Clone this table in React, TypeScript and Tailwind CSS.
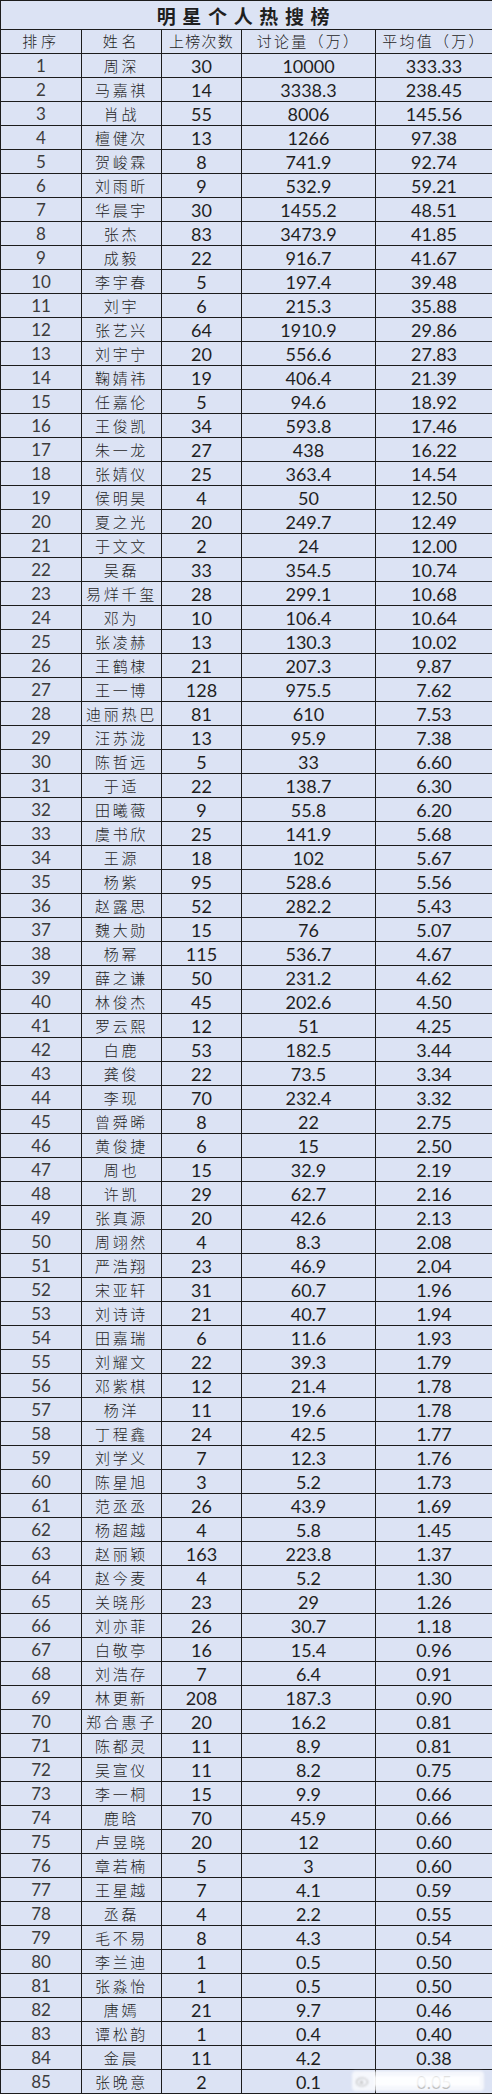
const rows: [string, string, string, string][] = [
  ["周深", "30", "10000", "333.33"],
  ["马嘉祺", "14", "3338.3", "238.45"],
  ["肖战", "55", "8006", "145.56"],
  ["檀健次", "13", "1266", "97.38"],
  ["贺峻霖", "8", "741.9", "92.74"],
  ["刘雨昕", "9", "532.9", "59.21"],
  ["华晨宇", "30", "1455.2", "48.51"],
  ["张杰", "83", "3473.9", "41.85"],
  ["成毅", "22", "916.7", "41.67"],
  ["李宇春", "5", "197.4", "39.48"],
  ["刘宇", "6", "215.3", "35.88"],
  ["张艺兴", "64", "1910.9", "29.86"],
  ["刘宇宁", "20", "556.6", "27.83"],
  ["鞠婧祎", "19", "406.4", "21.39"],
  ["任嘉伦", "5", "94.6", "18.92"],
  ["王俊凯", "34", "593.8", "17.46"],
  ["朱一龙", "27", "438", "16.22"],
  ["张婧仪", "25", "363.4", "14.54"],
  ["侯明昊", "4", "50", "12.50"],
  ["夏之光", "20", "249.7", "12.49"],
  ["于文文", "2", "24", "12.00"],
  ["吴磊", "33", "354.5", "10.74"],
  ["易烊千玺", "28", "299.1", "10.68"],
  ["邓为", "10", "106.4", "10.64"],
  ["张凌赫", "13", "130.3", "10.02"],
  ["王鹤棣", "21", "207.3", "9.87"],
  ["王一博", "128", "975.5", "7.62"],
  ["迪丽热巴", "81", "610", "7.53"],
  ["汪苏泷", "13", "95.9", "7.38"],
  ["陈哲远", "5", "33", "6.60"],
  ["于适", "22", "138.7", "6.30"],
  ["田曦薇", "9", "55.8", "6.20"],
  ["虞书欣", "25", "141.9", "5.68"],
  ["王源", "18", "102", "5.67"],
  ["杨紫", "95", "528.6", "5.56"],
  ["赵露思", "52", "282.2", "5.43"],
  ["魏大勋", "15", "76", "5.07"],
  ["杨幂", "115", "536.7", "4.67"],
  ["薛之谦", "50", "231.2", "4.62"],
  ["林俊杰", "45", "202.6", "4.50"],
  ["罗云熙", "12", "51", "4.25"],
  ["白鹿", "53", "182.5", "3.44"],
  ["龚俊", "22", "73.5", "3.34"],
  ["李现", "70", "232.4", "3.32"],
  ["曾舜晞", "8", "22", "2.75"],
  ["黄俊捷", "6", "15", "2.50"],
  ["周也", "15", "32.9", "2.19"],
  ["许凯", "29", "62.7", "2.16"],
  ["张真源", "20", "42.6", "2.13"],
  ["周翊然", "4", "8.3", "2.08"],
  ["严浩翔", "23", "46.9", "2.04"],
  ["宋亚轩", "31", "60.7", "1.96"],
  ["刘诗诗", "21", "40.7", "1.94"],
  ["田嘉瑞", "6", "11.6", "1.93"],
  ["刘耀文", "22", "39.3", "1.79"],
  ["邓紫棋", "12", "21.4", "1.78"],
  ["杨洋", "11", "19.6", "1.78"],
  ["丁程鑫", "24", "42.5", "1.77"],
  ["刘学义", "7", "12.3", "1.76"],
  ["陈星旭", "3", "5.2", "1.73"],
  ["范丞丞", "26", "43.9", "1.69"],
  ["杨超越", "4", "5.8", "1.45"],
  ["赵丽颖", "163", "223.8", "1.37"],
  ["赵今麦", "4", "5.2", "1.30"],
  ["关晓彤", "23", "29", "1.26"],
  ["刘亦菲", "26", "30.7", "1.18"],
  ["白敬亭", "16", "15.4", "0.96"],
  ["刘浩存", "7", "6.4", "0.91"],
  ["林更新", "208", "187.3", "0.90"],
  ["郑合惠子", "20", "16.2", "0.81"],
  ["陈都灵", "11", "8.9", "0.81"],
  ["吴宣仪", "11", "8.2", "0.75"],
  ["李一桐", "15", "9.9", "0.66"],
  ["鹿晗", "70", "45.9", "0.66"],
  ["卢昱晓", "20", "12", "0.60"],
  ["章若楠", "5", "3", "0.60"],
  ["王星越", "7", "4.1", "0.59"],
  ["丞磊", "4", "2.2", "0.55"],
  ["毛不易", "8", "4.3", "0.54"],
  ["李兰迪", "1", "0.5", "0.50"],
  ["张淼怡", "1", "0.5", "0.50"],
  ["唐嫣", "21", "9.7", "0.46"],
  ["谭松韵", "1", "0.4", "0.40"],
  ["金晨", "11", "4.2", "0.38"],
  ["张晚意", "2", "0.1", "0.05"],
];

const cjk = "font-['Noto_Sans_CJK_SC',sans-serif]";
const num = "font-['Lato','Open_Sans',sans-serif]";
const cell = "border border-[#1c1c1c] text-center align-middle p-0";

export default function App() {
  return (
    <div className="relative w-[492px] bg-[#dce3f4]">
      <table className="w-[492px] table-fixed border-collapse text-[#1f1f1f]">
        <colgroup>
          <col className="w-[81px]" />
          <col className="w-[80px]" />
          <col className="w-[80px]" />
          <col className="w-[134px]" />
          <col className="w-[117px]" />
        </colgroup>
        <thead>
          <tr className="h-[29px]">
            <th colSpan={5} className={`${cell} ${cjk} text-[19px] font-bold tracking-[0.35em] leading-none`}>
              明星个人热搜榜
            </th>
          </tr>
          <tr className="h-[24px]">
            <th className={`${cell} ${cjk} text-[15px] font-light tracking-[0.25em]`}>排序</th>
            <th className={`${cell} ${cjk} text-[15px] font-light tracking-[0.25em]`}>姓名</th>
            <th className={`${cell} ${cjk} text-[15px] font-light tracking-[0.08em]`}>上榜次数</th>
            <th className={`${cell} ${cjk} text-[15px] font-light tracking-[0.15em]`}>讨论量（万）</th>
            <th className={`${cell} ${cjk} text-[15px] font-light tracking-[0.15em]`}>平均值（万）</th>
          </tr>
        </thead>
        <tbody>
          {rows.map((r, i) => (
            <tr key={i} className="h-[24px] leading-none">
              <td className={`${cell} ${num} text-[17px] text-[#3c3c3c]`}>{i + 1}</td>
              <td className={`${cell} ${cjk} text-[15px] font-light tracking-[0.18em]`}>{r[0]}</td>
              <td className={`${cell} ${num} text-[18px]`}>{r[1]}</td>
              <td className={`${cell} ${num} text-[18px]`}>{r[2]}</td>
              <td className={`${cell} ${num} text-[18px]`}>{r[3]}</td>
            </tr>
          ))}
        </tbody>
      </table>
      <div className="absolute bottom-[3px] right-[8px] flex h-[20px] w-[132px] items-center gap-1 rounded-sm bg-white/70 px-1 blur-[1px]">
        <svg width="14" height="12" viewBox="0 0 14 12">
          <ellipse cx="6" cy="7" rx="5.5" ry="4" fill="none" stroke="#bbb" strokeWidth="1.2" />
          <circle cx="5.5" cy="7.3" r="1.6" fill="#bbb" />
        </svg>
        <div className="h-[10px] flex-1 bg-white/80" />
      </div>
    </div>
  );
}
